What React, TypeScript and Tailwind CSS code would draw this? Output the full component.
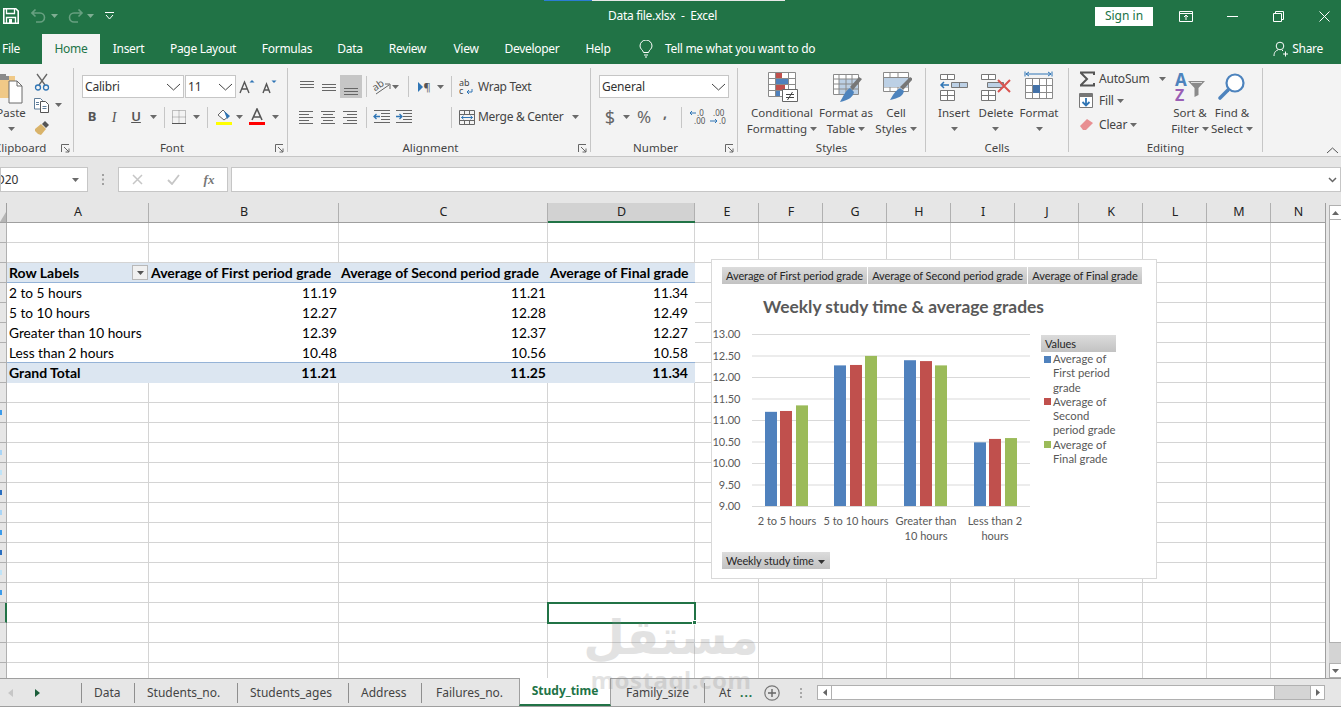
import type { ReactNode } from "react";

const UI = "font-['Noto_Sans',sans-serif]";
const CELL = "font-['Lato',sans-serif]";

function Caret({ color = "#6a6a6a" }: { color?: string }) {
  return (
    <svg width="7" height="4" viewBox="0 0 7 4" className="shrink-0">
      <path d="M0 0h7L3.500 4z" fill={color} />
    </svg>
  );
}

function Chevron() {
  return (
    <svg width="15" height="8" viewBox="0 0 15 8" className="shrink-0">
      <path d="M1 1l6.500 6L14 1" fill="none" stroke="#444" strokeWidth="1" />
    </svg>
  );
}

function Launcher() {
  return (
    <svg width="9" height="9" viewBox="0 0 9 9" className="shrink-0">
      <path d="M.5 8V.5H8M3 3l5 5M8 4.500V8H4.500" fill="none" stroke="#666" strokeWidth="1" />
    </svg>
  );
}

function Slot({ className, children }: { className: string; children?: ReactNode }) {
  return <div className={`flex h-full shrink-0 items-center justify-center ${className}`}>{children}</div>;
}

function Sep({ className }: { className: string }) {
  return (
    <div className={`flex h-full shrink-0 items-center justify-center ${className}`}>
      <div className="h-[21px] w-px bg-[#c6c6c6]" />
    </div>
  );
}

function Group({ className, label, launcher, children }: { className: string; label: ReactNode; launcher?: boolean; children: ReactNode }) {
  return (
    <div className={`flex h-[84px] shrink-0 flex-col border-r border-[#c6c6c6] ${className}`}>
      <div className="h-[74px] shrink-0">{children}</div>
      <div className="flex h-[12px] shrink-0 items-center">
        <div className="min-w-0 flex-1 text-center text-[11.5px] leading-[12px] text-[#444]">{label}</div>
        {launcher ? (
          <div className="flex w-[17px] justify-center pl-[1px]">
            <Launcher />
          </div>
        ) : null}
      </div>
    </div>
  );
}

function BigBtn({ className, icon, lines, caretOwnLine }: { className: string; icon: ReactNode; lines: ReactNode[]; caretOwnLine?: boolean }) {
  return (
    <div className={`flex shrink-0 flex-col items-center pt-[4px] ${className}`}>
      <div className="flex h-[30px] items-center justify-center">{icon}</div>
      <div className="mt-[3px] flex flex-col items-center whitespace-nowrap text-[11.5px] leading-[16px] text-[#444]">
        {lines.map((l, i) => (
          <div key={i} className="flex items-center gap-[3px]">
            {l}
            {!caretOwnLine && i === lines.length - 1 ? <Caret /> : null}
          </div>
        ))}
        {caretOwnLine ? (
          <div className="flex h-[16px] items-center">
            <Caret />
          </div>
        ) : null}
      </div>
    </div>
  );
}

function ComboBox({ className, text }: { className: string; text: string }) {
  return (
    <div className={`flex h-[23px] shrink-0 items-center justify-between border border-[#c6c6c6] bg-white pl-[2px] pr-[2px] text-[12px] tracking-[-0.2px] text-[#333] ${className}`}>
      <span>{text}</span>
      <Chevron />
    </div>
  );
}

const alignLines: Record<string, string> = {
  top: "M3 4.500h14M3 7.500h14M3 10.500h14",
  middle: "M3 7.500h14M3 10.500h14M3 13.500h14",
  bottom: "M3 11.500h14M3 14.500h14M3 17.500h14",
  left: "M2 4.500h14M2 7.500h10M2 10.500h14M2 13.500h10M2 16.500h14",
  center: "M2 4.500h14M4 7.500h10M2 10.500h14M4 13.500h10M2 16.500h14",
  right: "M2 4.500h14M6 7.500h10M2 10.500h14M6 13.500h10M2 16.500h14",
};

function AlignIcon({ kind }: { kind: string }) {
  return (
    <svg width="20" height="20" viewBox="0 0 20 20">
      <path d={alignLines[kind]} stroke="#666" strokeWidth="1" fill="none" />
    </svg>
  );
}

function ClipboardCol() {
  return (
    <div className="flex h-full">
      <div className="-ml-[4px] flex w-[30px] shrink-0 flex-col items-center pt-[4px]">
        <div className="h-[30px]">
          <svg width="32" height="32" viewBox="0 0 32 32" className="-ml-[1px]">
            <path d="M-6 4h26v22H-6z" fill="#f0c987" />
            <path d="M3 2h8v2h3v4H0V4h3z" fill="#8a8a8a" />
            <path d="M14 9h8l5 5v17H14z" fill="#fff" stroke="#6a6a6a" />
            <path d="M22 9v5h5" fill="none" stroke="#6a6a6a" />
          </svg>
        </div>
        <div className="mt-[3px] text-[11.5px] leading-[16px] text-[#444]">Paste</div>
        <div className="flex h-[16px] items-center">
          <Caret />
        </div>
      </div>
      <div className="ml-[6px] flex w-[33px] flex-col">
        <div className="mt-[2px] flex h-[23px] items-center pl-[2px]">
          <svg width="16" height="18" viewBox="0 0 16 18">
            <path d="M3 1l8 11M13 1L5 12" stroke="#666" strokeWidth="1.300" fill="none" />
            <circle cx="4" cy="14.500" r="2.500" fill="none" stroke="#2f75b5" strokeWidth="1.300" />
            <circle cx="12" cy="14.500" r="2.500" fill="none" stroke="#2f75b5" strokeWidth="1.300" />
          </svg>
        </div>
        <div className="flex h-[23px] items-center pl-[1px]">
          <svg width="17" height="16" viewBox="0 0 17 16">
            <path d="M1.500 1.500h6l2 2V12h-8z" fill="#fff" stroke="#5f7d99" />
            <path d="M7.500 4.500h5l3 3v8h-8z" fill="#fff" stroke="#555" />
            <path d="M9.500 9.500h4M9.500 11.500h4M3 5.500h3M3 7.500h3" stroke="#5f7d99" />
          </svg>
          <div className="ml-[5px]">
            <Caret />
          </div>
        </div>
        <div className="flex h-[23px] items-center pl-[2px]">
          <svg width="16" height="16" viewBox="0 0 16 16">
            <path d="M1 9l6-5 5 5-5 6-3-1-3-3z" fill="#d9b36a" />
            <path d="M8 4l3-3 4 4-3 3z" fill="#555" />
          </svg>
        </div>
      </div>
    </div>
  );
}

function FontGroup() {
  return (
    <div className="pt-[7px]">
      <div className="flex h-[23px] pl-[8px]">
        <ComboBox className="w-[102px]" text="Calibri" />
        <ComboBox className="ml-px w-[51px]" text="11" />
        <Slot className="w-[22px]">
          <svg width="16" height="16" viewBox="0 0 16 16">
            <path d="M1 14L5.500 3 10 14M2.800 10h5.400" fill="none" stroke="#555" strokeWidth="1.400" />
            <path d="M10.500 3.500L13 1l2.500 2.500z" fill="#2f75b5" />
          </svg>
        </Slot>
        <Slot className="w-[22px]">
          <svg width="16" height="16" viewBox="0 0 16 16">
            <path d="M2 14L5.500 5 9 14M3.300 11h4.400" fill="none" stroke="#555" strokeWidth="1.400" />
            <path d="M10.500 1.500L13 4l2.500-2.500z" fill="#2f75b5" />
          </svg>
        </Slot>
      </div>
      <div className="mt-[8px] flex h-[22px] pl-[7px] text-[#555]">
        <Slot className="w-[22px] text-[13px] font-bold">B</Slot>
        <Slot className="w-[22px] font-['Liberation_Serif',serif] text-[14px] italic">I</Slot>
        <Slot className="w-[22px] text-[13px] font-semibold underline">U</Slot>
        <Slot className="w-[12px]">
          <Caret />
        </Slot>
        <Sep className="w-[10px]" />
        <Slot className="w-[20px]">
          <svg width="14" height="14" viewBox="0 0 14 14">
            <path d="M.500.500h13v13H.500zM7 .500v13M.500 7h13" fill="none" stroke="#888" strokeDasharray="1 1" />
            <path d="M0 13.500h14" stroke="#555" />
          </svg>
        </Slot>
        <Slot className="w-[14px]">
          <Caret />
        </Slot>
        <Sep className="w-[8px]" />
        <Slot className="w-[25px]">
          <svg width="18" height="18" viewBox="0 0 18 18">
            <path d="M3 7l5-5 6 6-5 4z" fill="#fff" stroke="#666" />
            <path d="M9 3l6 5-3 3z" fill="#2f75b5" />
            <path d="M1 14h16v3H1z" fill="#ffff00" />
          </svg>
        </Slot>
        <Slot className="w-[6px]">
          <Caret />
        </Slot>
        <Slot className="w-[30px]">
          <svg width="18" height="18" viewBox="0 0 18 18">
            <path d="M4 12L9 1l5 11M5.500 9h7" fill="none" stroke="#555" strokeWidth="1.600" />
            <path d="M1 14h16v3H1z" fill="#ff0000" />
          </svg>
        </Slot>
        <Slot className="w-[6px]">
          <Caret />
        </Slot>
      </div>
    </div>
  );
}

function AlignmentGroup() {
  return (
    <div className="pt-[7px]">
      <div className="flex h-[23px] pl-[8px]">
        <Slot className="w-[22px]">
          <AlignIcon kind="top" />
        </Slot>
        <Slot className="w-[22px]">
          <AlignIcon kind="middle" />
        </Slot>
        <Slot className="w-[22px] bg-[#c6c6c6]">
          <AlignIcon kind="bottom" />
        </Slot>
        <Sep className="w-[8px]" />
        <Slot className="w-[22px]">
          <svg width="20" height="18" viewBox="0 0 20 18">
            <text x="2" y="11" fontSize="10" fill="#555" transform="rotate(-35 7 9)" fontFamily="Noto Sans">ab</text>
            <path d="M5 16L18 7M14 6h5v5" stroke="#666" fill="none" />
          </svg>
        </Slot>
        <Slot className="w-[6px]">
          <Caret />
        </Slot>
        <Sep className="w-[20px]" />
        <Slot className="w-[14px]">
          <svg width="14" height="12" viewBox="0 0 14 12">
            <path d="M0 1l5 5-5 5z" fill="#2f75b5" />
            <text x="5.500" y="10" fontSize="11" fill="#555" fontFamily="Noto Sans">¶</text>
          </svg>
        </Slot>
        <Slot className="w-[16px]">
          <Caret />
        </Slot>
        <Sep className="w-[6px]" />
        <Slot className="ml-[3px] w-[20px]">
          <svg width="16" height="16" viewBox="0 0 16 16">
            <text x="0" y="7" fontSize="9" fill="#444" fontFamily="Noto Sans">ab</text>
            <text x="0" y="15" fontSize="9" fill="#444" fontFamily="Noto Sans">c</text>
            <path d="M13 10v3H8M10 11l-2 2 2 2" fill="none" stroke="#2f75b5" />
          </svg>
        </Slot>
        <div className="ml-px flex items-center whitespace-nowrap text-[12px] tracking-[-0.3px] text-[#444]">Wrap Text</div>
      </div>
      <div className="mt-[8px] flex h-[22px] pl-[8px]">
        <Slot className="w-[22px]">
          <AlignIcon kind="left" />
        </Slot>
        <Slot className="w-[22px]">
          <AlignIcon kind="center" />
        </Slot>
        <Slot className="w-[22px]">
          <AlignIcon kind="right" />
        </Slot>
        <Sep className="w-[8px]" />
        <Slot className="w-[22px]">
          <svg width="17" height="14" viewBox="0 0 17 14">
            <path d="M1 .500h16M8 3.500h9M8 6.500h9M8 9.500h9M1 12.500h16" stroke="#666" fill="none" />
            <path d="M7 6.500H1M3.500 4L1 6.500 3.500 9" stroke="#2f75b5" strokeWidth="1.300" fill="none" />
          </svg>
        </Slot>
        <Slot className="w-[22px]">
          <svg width="17" height="14" viewBox="0 0 17 14">
            <path d="M1 .500h16M8 3.500h9M8 6.500h9M8 9.500h9M1 12.500h16" stroke="#666" fill="none" />
            <path d="M1 6.500h6M4.500 4L7 6.500 4.500 9" stroke="#2f75b5" strokeWidth="1.300" fill="none" />
          </svg>
        </Slot>
        <Sep className="ml-[37px] w-[1px]" />
        <Slot className="ml-[5px] w-[20px]">
          <svg width="16" height="15" viewBox="0 0 16 15">
            <path d="M.500.500h15v14H.500zM.500 4.500h15M.500 10.500h15M5.500.500v4M10.500.500v4M5.500 10.500v4M10.500 10.500v4" fill="none" stroke="#666" />
            <path d="M2.500 7.500h11M4.500 5.800l-2 1.700 2 1.700M11.500 5.800l2 1.700-2 1.700" fill="none" stroke="#2f75b5" />
          </svg>
        </Slot>
        <div className="ml-px flex w-[85px] shrink-0 items-center whitespace-nowrap text-[12px] tracking-[-0.3px] text-[#444]">Merge &amp; Center</div>
        <Slot className="w-[24px]">
          <Caret />
        </Slot>
      </div>
    </div>
  );
}

function NumberGroup() {
  return (
    <div className="pt-[7px]">
      <div className="pl-[8px]">
        <ComboBox className="w-[130px]" text="General" />
      </div>
      <div className="mt-[8px] flex h-[22px] pl-[8px] text-[#666]">
        <Slot className="w-[22px] text-[18px]">$</Slot>
        <Slot className="w-[10px]">
          <Caret />
        </Slot>
        <Slot className="w-[26px] text-[17px]">%</Slot>
        <Slot className="w-[16px] pb-[9px] text-[14px] font-bold">,</Slot>
        <Sep className="w-[16px]" />
        <Slot className="w-[18px]">
          <svg width="18" height="16" viewBox="0 0 18 16">
            <text x="8" y="7" fontSize="8" fill="#555" fontFamily="Noto Sans">.0</text>
            <text x="5" y="15" fontSize="8" fill="#555" fontFamily="Noto Sans">.00</text>
            <path d="M7 4H1M3 2L1 4l2 2" fill="none" stroke="#2f75b5" />
          </svg>
        </Slot>
        <Slot className="w-[22px]">
          <svg width="18" height="16" viewBox="0 0 18 16">
            <text x="4" y="7" fontSize="8" fill="#555" fontFamily="Noto Sans">.00</text>
            <text x="10" y="15" fontSize="8" fill="#555" fontFamily="Noto Sans">.0</text>
            <path d="M1 12h7M6 10l2 2-2 2" fill="none" stroke="#2f75b5" />
          </svg>
        </Slot>
      </div>
    </div>
  );
}

function CondFormatIcon() {
  return (
    <svg width="32" height="30" viewBox="0 0 32 30">
      <path d="M2.500.500h27v24h-27zM2.500 6.500h27M2.500 12.500h27M2.500 18.500h27M9.500.500v24M22.500.500v24" fill="#fff" stroke="#8a8a8a" />
      <path d="M10 1h6v5h-6zM10 13h9v5h-9z" fill="#c0504d" />
      <path d="M10 7h12v5H10zM10 19h4v5h-4z" fill="#4f81bd" />
      <path d="M16.500 17.500h15v12h-15z" fill="#fff" stroke="#666" />
      <path d="M20 22.500h8M20 25.500h8M26.500 20l-5 8" stroke="#444" fill="none" />
    </svg>
  );
}

function TableIcon() {
  return (
    <svg width="32" height="30" viewBox="0 0 32 30">
      <path d="M3.500 2.500h25v20h-25z" fill="#fff" stroke="#8a8a8a" />
      <path d="M9 7h19v15H9z" fill="#bcd0e5" />
      <path d="M3.500 7h25M3.500 12h25M3.500 17h25M9 2.500v20M16 2.500v20M22 2.500v20" stroke="#8a8a8a" fill="none" />
      <path d="M32 7l-9 11-3-3 9-10z" fill="#777" />
      <path d="M20 16l4 4c-1 5-5 8-14 10 3-5 5-11 10-14z" fill="#4d83bd" />
    </svg>
  );
}

function CellStyleIcon() {
  return (
    <svg width="32" height="30" viewBox="0 0 32 30">
      <path d="M3.500.500h25v19h-25zM3.500 5.500h25M3.500 15h25M10 .500v5M18 .500v5M10 15v4.500M18 15v4.500" fill="#fff" stroke="#8a8a8a" />
      <path d="M4 6h24v9H4z" fill="#bcd0e5" />
      <path d="M33 7l-10 11-3-3 10-10z" fill="#777" />
      <path d="M20 16l4 3c-1 5-5 7-14 9 3-5 5-9 10-12z" fill="#4d83bd" />
    </svg>
  );
}

function InsertIcon() {
  return (
    <svg width="30" height="30" viewBox="0 0 30 30">
      <path d="M1.500 2.500h14v5h-14zM8.500 2.500v5M1.500 18.500h14v10h-14zM1.500 23.500h14M8.500 18.500v10" fill="#fff" stroke="#777" />
      <path d="M12.500 10.500h16v5h-16z" fill="#bcd0e5" stroke="#777" />
      <path d="M20.500 10.500v5" stroke="#777" />
      <path d="M10 13H2M5 10l-3 3 3 3" fill="none" stroke="#2f75b5" strokeWidth="1.500" />
    </svg>
  );
}

function DeleteIcon() {
  return (
    <svg width="32" height="30" viewBox="0 0 32 30">
      <path d="M1.500 2.500h14v5h-14zM8.500 2.500v5M1.500 18.500h14v10h-14zM1.500 23.500h14M8.500 18.500v10" fill="#fff" stroke="#777" />
      <path d="M7.500 10.500h16v5h-16z" fill="#bcd0e5" stroke="#777" />
      <path d="M18 8l12 12M30 8L18 20" stroke="#d9534f" strokeWidth="2" />
    </svg>
  );
}

function FormatIcon() {
  return (
    <svg width="30" height="32" viewBox="0 0 30 32">
      <path d="M1 .500v5M28 .500v5" stroke="#2f75b5" />
      <path d="M2 3h25M5 1L2 3l3 2M24 1l3 2-3 2" fill="none" stroke="#2f75b5" />
      <path d="M1.500 7.500h27v20H1.500zM1.500 14.500h27M1.500 21.500h27M8.500 7.500v20M15.500 7.500v20M22.500 7.500v20" fill="#fff" stroke="#8a8a8a" />
      <path d="M9 14h7v8H9z" fill="#4472a8" />
    </svg>
  );
}

function SortIcon() {
  return (
    <svg width="32" height="30" viewBox="0 0 32 30">
      <text x="1" y="14" fontSize="17" fontWeight="700" fill="#4d83bd" fontFamily="Noto Sans">A</text>
      <text x="1" y="29" fontSize="16" fontWeight="700" fill="#9a5fb5" fontFamily="Noto Sans">Z</text>
      <path d="M14 9h17l-6.500 7v7l-4 2v-9z" fill="#8a8a8a" />
      <path d="M17 10.500h11" stroke="#ddd" />
    </svg>
  );
}

function FindIcon() {
  return (
    <svg width="30" height="30" viewBox="0 0 30 30">
      <circle cx="18" cy="11" r="8.500" fill="#fff" stroke="#4d83bd" strokeWidth="2.200" />
      <path d="M11 18L3 26" stroke="#4d83bd" strokeWidth="3.600" strokeLinecap="round" />
    </svg>
  );
}

function EditingGroup() {
  return (
    <div className="flex h-full">
      <div className="w-[101px] shrink-0 pl-[10px] text-[12px] tracking-[-0.2px] text-[#444]">
        <div className="flex h-[21px] items-center">
          <svg width="16" height="16" viewBox="0 0 16 16">
            <path d="M1 1.500h14v2.500M1 14.500h14V12M1.500 1.500L8 8l-6.500 6.500" fill="none" stroke="#555" strokeWidth="2" />
          </svg>
          <span className="ml-[4px]">AutoSum</span>
          <div className="ml-[9px]">
            <Caret />
          </div>
        </div>
        <div className="flex h-[23px] items-center">
          <svg width="15" height="16" viewBox="0 0 15 16">
            <path d="M.500.500h13v14H.500z" fill="#fff" stroke="#777" />
            <path d="M1 1h12v3H1z" fill="#777" />
            <path d="M7 5v7M3.500 9L7 12.500 10.500 9" fill="none" stroke="#2f75b5" strokeWidth="1.800" />
          </svg>
          <span className="ml-[5px]">Fill</span>
          <div className="ml-[3px]">
            <Caret />
          </div>
        </div>
        <div className="mt-px flex h-[23px] items-center">
          <svg width="15" height="13" viewBox="0 0 15 13">
            <path d="M1 8l7-7 6 4-7 7H4z" fill="#e88f92" />
          </svg>
          <span className="ml-[5px]">Clear</span>
          <div className="ml-[3px]">
            <Caret />
          </div>
        </div>
      </div>
      <BigBtn className="w-[40px]" icon={<SortIcon />} lines={["Sort &", "Filter"]} />
      <BigBtn className="w-[44px]" icon={<FindIcon />} lines={["Find &", "Select"]} />
    </div>
  );
}

function Ribbon() {
  return (
    <div className={`flex h-[93px] shrink-0 border-b border-[#c6c6c6] bg-[#f3f3f3] pt-[4px] ${UI}`}>
      <Group className="w-[74px]" launcher label={<div className="-ml-[6px] text-left">Clipboard</div>}>
        <ClipboardCol />
      </Group>
      <Group className="w-[214px]" launcher label="Font">
        <FontGroup />
      </Group>
      <Group className="w-[303px]" launcher label="Alignment">
        <AlignmentGroup />
      </Group>
      <Group className="w-[147px]" launcher label="Number">
        <NumberGroup />
      </Group>
      <Group className="w-[188px]" label="Styles">
        <div className="flex pl-[4px]">
          <BigBtn className="w-[80px]" icon={<CondFormatIcon />} lines={["Conditional", "Formatting"]} />
          <BigBtn className="w-[48px]" icon={<TableIcon />} lines={["Format as", "Table"]} />
          <BigBtn className="w-[52px]" icon={<CellStyleIcon />} lines={["Cell", "Styles"]} />
        </div>
      </Group>
      <Group className="w-[143px]" label="Cells">
        <div className="flex pl-[4px]">
          <BigBtn className="w-[48px]" icon={<InsertIcon />} lines={["Insert"]} caretOwnLine />
          <BigBtn className="w-[36px]" icon={<DeleteIcon />} lines={["Delete"]} caretOwnLine />
          <BigBtn className="w-[50px]" icon={<FormatIcon />} lines={["Format"]} caretOwnLine />
        </div>
      </Group>
      <Group className="w-[194px]" label="Editing">
        <EditingGroup />
      </Group>
      <div className="flex flex-1 items-end justify-end pb-[2px] pr-[2px]">
        <svg width="13" height="7" viewBox="0 0 13 7">
          <path d="M1 6l5.500-5L12 6" fill="none" stroke="#555" />
        </svg>
      </div>
    </div>
  );
}

function TitleBar() {
  return (
    <div className="relative flex h-[32px] shrink-0 items-center text-white">
      <div className="absolute left-[544px] top-0 flex h-px">
        <div className="h-px w-[48px] bg-[#2b7cd3]" />
        <div className="h-px w-[193px] bg-[#e8e8e8]" />
      </div>
      <div className="flex w-[120px] items-center pl-[3px]">
        <svg width="16" height="16" viewBox="0 0 16 16">
          <path d="M.800.800h12l2.400 2.400v12H.800z" fill="none" stroke="#fff" strokeWidth="1.600" />
          <path d="M3.500 1v4.500h8V1M3.500 15V9.500h9V15" fill="none" stroke="#fff" strokeWidth="1.300" />
          <path d="M6 11h3v4H6z" fill="#fff" />
        </svg>
        <svg width="20" height="14" viewBox="0 0 20 14" className="ml-[12px] opacity-40">
          <path d="M1 4h8a4.500 4.500 0 010 9H5M4.500.500L1 4l3.500 3.500" fill="none" stroke="#cfe3d7" strokeWidth="1.600" />
        </svg>
        <Caret color="#7fae93" />
        <svg width="20" height="14" viewBox="0 0 20 14" className="ml-[9px] opacity-40">
          <path d="M15 4H7a4.500 4.500 0 000 9h4M11.500.500L15 4l-3.500 3.500" fill="none" stroke="#cfe3d7" strokeWidth="1.600" />
        </svg>
        <Caret color="#7fae93" />
        <svg width="9" height="8" viewBox="0 0 9 8" className="ml-[11px]">
          <path d="M0 .500h9M1 3l3.500 4L8 3" fill="none" stroke="#fff" />
        </svg>
      </div>
      <div className={`absolute left-[608px] whitespace-pre text-[12px] tracking-[-0.3px] ${UI}`}>Data file.xlsx  -  Excel</div>
      <div className="ml-auto flex items-center">
        <div className={`flex h-[19px] w-[58px] items-center justify-center bg-white text-[12px] text-[#217346] ${UI}`}>Sign in</div>
        <div className="ml-[26px] flex w-[14px] justify-center">
          <svg width="14" height="11" viewBox="0 0 14 11">
            <path d="M.500.500h13v10H.500zM.500 2.500h13" fill="none" stroke="#fff" />
            <path d="M7 9V4M5 6l2-2 2 2" fill="none" stroke="#fff" />
          </svg>
        </div>
        <div className="ml-[34px] h-px w-[11px] bg-white" />
        <svg width="11" height="11" viewBox="0 0 11 11" className="ml-[35px]">
          <path d="M.500 2.500h8v8h-8zM2.500 2.500v-2h8v8h-2" fill="none" stroke="#fff" />
        </svg>
        <svg width="11" height="11" viewBox="0 0 11 11" className="ml-[35px] mr-[11px]">
          <path d="M.500.500l10 10M10.500.500l-10 10" stroke="#fff" />
        </svg>
      </div>
    </div>
  );
}

function TabRow() {
  const tabs = [
    { label: "Insert", w: "w-[57px]" },
    { label: "Page Layout", w: "w-[92px]" },
    { label: "Formulas", w: "w-[76px]" },
    { label: "Data", w: "w-[50px]" },
    { label: "Review", w: "w-[65px]" },
    { label: "View", w: "w-[52px]" },
    { label: "Developer", w: "w-[80px]" },
    { label: "Help", w: "w-[52px]" },
  ];
  return (
    <div className={`flex h-[32px] shrink-0 items-end text-[12px] tracking-[-0.3px] text-white ${UI}`}>
      <div className="flex h-[30px] w-[42px] items-center pl-[2px]">File</div>
      <div className="flex h-[30px] w-[58px] items-center justify-center bg-[#f3f3f3] text-[#217346]">Home</div>
      {tabs.map((t) => (
        <div key={t.label} className={`flex h-[30px] items-center justify-center ${t.w}`}>
          {t.label}
        </div>
      ))}
      <div className="flex h-[30px] items-center pl-[15px]">
        <svg width="14" height="18" viewBox="0 0 14 18">
          <path d="M4.500 12.500C4 10 1 9 1 6a6 6 0 0112 0c0 3-3 4-3.500 6.500zM5 15h4M6 17h2" fill="none" stroke="#fff" />
        </svg>
        <span className="ml-[12px]">Tell me what you want to do</span>
      </div>
      <div className="ml-auto flex h-[30px] items-center pr-[18px]">
        <svg width="16" height="16" viewBox="0 0 16 16">
          <circle cx="7" cy="5" r="3.800" fill="none" stroke="#fff" />
          <path d="M1 15c0-4 2-5.500 4-6M9 9l1 1M10 13h5M12.500 10.500v5" fill="none" stroke="#fff" />
        </svg>
        <span className="ml-[3px]">Share</span>
      </div>
    </div>
  );
}

function FormulaBar() {
  return (
    <div className="flex h-[35px] shrink-0 items-end bg-[#e6e6e6]">
      <div className={`flex h-[25px] w-[88px] items-center justify-between overflow-hidden border border-[#c6c6c6] bg-white pr-[8px] text-[12px] text-[#333] ${UI}`}>
        <span className="-ml-[5px]">D20</span>
        <Caret />
      </div>
      <div className="flex h-[25px] w-[30px] items-center justify-center text-[#a0a0a0]">
        <svg width="2" height="11" viewBox="0 0 2 11">
          <path d="M0 0h2v2H0zM0 4.500h2v2H0zM0 9h2v2H0z" fill="#a0a0a0" />
        </svg>
      </div>
      <div className="flex h-[25px] w-[110px] items-center border border-[#c6c6c6] bg-white">
        <Slot className="w-[36px]">
          <svg width="11" height="11" viewBox="0 0 11 11">
            <path d="M1 1l9 9M10 1l-9 9" stroke="#c6c6c6" strokeWidth="1.500" />
          </svg>
        </Slot>
        <Slot className="w-[36px]">
          <svg width="13" height="11" viewBox="0 0 13 11">
            <path d="M1 6l4 4 7-9" fill="none" stroke="#c6c6c6" strokeWidth="1.800" />
          </svg>
        </Slot>
        <Slot className="w-[36px] font-['Liberation_Serif',serif] text-[13px] font-bold italic text-[#777]">fx</Slot>
      </div>
      <div className="ml-[3px] flex h-[25px] flex-1 items-center justify-end border border-[#c6c6c6] bg-white pr-[3px]">
        <svg width="9" height="6" viewBox="0 0 9 6">
          <path d="M1 1l3.500 3.500L8 1" fill="none" stroke="#666" strokeWidth="1.500" />
        </svg>
      </div>
    </div>
  );
}

const colW = [
  "w-[142px]", "w-[190px]", "w-[209px]", "w-[147px]", "w-[64px]", "w-[64px]", "w-[64px]",
  "w-[64px]", "w-[64px]", "w-[64px]", "w-[64px]", "w-[64px]", "w-[64px]", "w-[55px]",
];
const colNames = "ABCDEFGHIJKLMN".split("");

const table: { label: string; vals: string[] }[] = [
  { label: "2 to 5 hours", vals: ["11.19", "11.21", "11.34"] },
  { label: "5 to 10 hours", vals: ["12.27", "12.28", "12.49"] },
  { label: "Greater than 10 hours", vals: ["12.39", "12.37", "12.27"] },
  { label: "Less than 2 hours", vals: ["10.48", "10.56", "10.58"] },
];

// clipped row numbers leave these coloured slivers at the window edge
const rowSlivers: Record<number, string> = {
  9: "bg-[#3b9bea]",
  11: "bg-[#a8d4f5]",
  12: "bg-[#bfe3f7]",
  13: "bg-[#2a6fc0]",
  14: "bg-[#a8d4f5]",
  15: "bg-[#3b9bea]",
  16: "bg-[#2a6fc0]",
  17: "bg-[#bfe3f7]",
  18: "bg-[#3b9bea]",
};

function ColHeader() {
  return (
    <div className="flex h-[20px] border-b border-[#9f9f9f]">
      <div className="flex w-[7px] shrink-0 items-end justify-end border-r border-[#9f9f9f]">
        <div className="h-0 w-0 border-b-[10px] border-l-[6px] border-b-[#b5b5b5] border-l-transparent" />
      </div>
      {colNames.map((c, i) => (
        <div
          key={c}
          className={`relative flex shrink-0 items-center justify-center text-[12.500px] text-[#222] ${colW[i]} ${c === "D" ? "bg-[#d2d2d2]" : ""}`}
        >
          {c}
          <div className="absolute bottom-0 right-0 top-0 w-px bg-[#b0b0b0]" />
          {c === "D" ? <div className="absolute -bottom-px left-0 right-0 h-[2px] bg-[#217346]" /> : null}
        </div>
      ))}
    </div>
  );
}

function Cells({ from }: { from: number }) {
  return (
    <>
      {colW.slice(from).map((w, i) => (
        <div key={i} className={`h-full shrink-0 border-b border-r border-[#d4d4d4] bg-white ${w}`} />
      ))}
    </>
  );
}

function SheetRow({ index }: { index: number }) {
  const selected = index === 19;
  let body: ReactNode = <Cells from={0} />;
  if (index === 2) {
    body = (
      <>
        <div className="flex h-full w-[142px] shrink-0 items-center justify-between border-b border-[#95b3d7] bg-[#dce6f1] pl-[2px] pr-px text-[14px] font-bold">
          <span>Row Labels</span>
          <div className="flex h-[15px] w-[16px] items-center justify-center border border-[#b8b8b8] bg-[#f0f0f0]">
            <Caret color="#555" />
          </div>
        </div>
        <div className="flex h-full w-[190px] shrink-0 items-center border-b border-[#95b3d7] bg-[#dce6f1] pl-[2px] text-[14px] font-bold">Average of First period grade</div>
        <div className="flex h-full w-[209px] shrink-0 items-center border-b border-[#95b3d7] bg-[#dce6f1] pl-[2px] text-[14px] font-bold">Average of Second period grade</div>
        <div className="flex h-full w-[147px] shrink-0 items-center border-b border-[#95b3d7] bg-[#dce6f1] pl-[2px] text-[14px] font-bold">Average of Final grade</div>
        <Cells from={4} />
      </>
    );
  } else if (index >= 3 && index <= 6) {
    const row = table[index - 3];
    const line = index === 6 ? "border-b border-[#95b3d7]" : "";
    body = (
      <>
        <div className={`flex h-full w-[142px] shrink-0 items-center bg-white pl-[2px] ${line}`}>{row.label}</div>
        <div className={`flex h-full w-[190px] shrink-0 items-center justify-end bg-white pr-[2px] ${line}`}>{row.vals[0]}</div>
        <div className={`flex h-full w-[209px] shrink-0 items-center justify-end bg-white pr-[2px] ${line}`}>{row.vals[1]}</div>
        <div className={`flex h-full w-[147px] shrink-0 items-center justify-end bg-white pr-[7px] ${line}`}>{row.vals[2]}</div>
        <Cells from={4} />
      </>
    );
  } else if (index === 7) {
    body = (
      <>
        <div className="flex h-full w-[142px] shrink-0 items-center bg-[#dce6f1] pl-[2px] text-[14px] font-bold">Grand Total</div>
        <div className="flex h-full w-[190px] shrink-0 items-center justify-end bg-[#dce6f1] pr-[2px] text-[14px] font-bold">11.21</div>
        <div className="flex h-full w-[209px] shrink-0 items-center justify-end bg-[#dce6f1] pr-[2px] text-[14px] font-bold">11.25</div>
        <div className="flex h-full w-[147px] shrink-0 items-center justify-end bg-[#dce6f1] pr-[7px] text-[14px] font-bold">11.34</div>
        <Cells from={4} />
      </>
    );
  }
  return (
    <div className={`flex h-[20px] shrink-0 text-[13.700px] leading-none text-black ${CELL}`}>
      <div className={`flex h-full w-[7px] shrink-0 items-center border-b border-r border-[#b0b0b0] ${selected ? "border-r-2 border-r-[#217346] bg-[#d2d2d2]" : "bg-[#e6e6e6]"}`}>
        {rowSlivers[index] ? <div className={`h-[5px] w-[2px] ${rowSlivers[index]}`} /> : null}
      </div>
      {body}
    </div>
  );
}

function Bars() {
  const groups = [
    { x: [765, 780, 796], v: [11.19, 11.21, 11.34] },
    { x: [834, 850, 865], v: [12.27, 12.28, 12.49] },
    { x: [904, 920, 935], v: [12.39, 12.37, 12.27] },
    { x: [974, 989, 1005], v: [10.48, 10.56, 10.58] },
  ];
  const colors = ["#4f81bd", "#c0504d", "#9bbb59"];
  const ticks = ["13.00", "12.50", "12.00", "11.50", "11.00", "10.50", "10.00", "9.50", "9.00"];
  const txt = { fontFamily: "Lato", fontSize: 11, fill: "#595959" };
  return (
    <svg width="325" height="227" viewBox="712 318 325 227" className="shrink-0">
      {ticks.map((t, i) => (
        <g key={t}>
          <path d={`M752 ${334.5 + i * 21.5}H1030`} stroke="#d9d9d9" />
          <text x="740.500" y={338 + i * 21.5} textAnchor="end" {...txt}>{t}</text>
        </g>
      ))}
      {groups.map((g) =>
        g.x.map((x, i) => {
          const top = 506 - (g.v[i] - 9) * 43;
          return <rect key={x} x={x} y={top} width="12" height={506 - top} fill={colors[i]} />;
        }),
      )}
      <text x="787" y="525" textAnchor="middle" {...txt}>2 to 5 hours</text>
      <text x="856" y="525" textAnchor="middle" {...txt}>5 to 10 hours</text>
      <text x="926" y="525" textAnchor="middle" {...txt}>Greater than</text>
      <text x="926" y="540" textAnchor="middle" {...txt}>10 hours</text>
      <text x="995" y="525" textAnchor="middle" {...txt}>Less than 2</text>
      <text x="995" y="540" textAnchor="middle" {...txt}>hours</text>
    </svg>
  );
}

function FieldBtn({ className, children }: { className: string; children: ReactNode }) {
  return (
    <div className={`flex h-[17px] shrink-0 items-center whitespace-nowrap bg-gradient-to-b from-[#dcdcdc] to-[#c2c2c2] pt-[2px] text-[11px] tracking-[-0.1px] text-[#262626] ${className}`}>
      {children}
    </div>
  );
}

function Chart() {
  const legend = [
    { color: "bg-[#4f81bd]", lines: ["Average of", "First period", "grade"] },
    { color: "bg-[#c0504d]", lines: ["Average of", "Second", "period grade"] },
    { color: "bg-[#9bbb59]", lines: ["Average of", "Final grade"] },
  ];
  return (
    <div className={`absolute left-[711px] top-[56px] h-[320px] w-[446px] border border-[#d9d9d9] bg-white ${CELL}`}>
      <div className="flex gap-px pl-[10px] pt-[7px]">
        <FieldBtn className="w-[145px] justify-center">Average of First period grade</FieldBtn>
        <FieldBtn className="w-[159px] justify-center">Average of Second period grade</FieldBtn>
        <FieldBtn className="w-[114px] justify-center">Average of Final grade</FieldBtn>
      </div>
      <div className="mt-[12px] h-[22px] pl-[51px] text-[17.400px] font-bold leading-[22px] text-[#595959]">Weekly study time &amp; average grades</div>
      <div className="flex">
        <Bars />
        <div className="ml-[4px] mt-[17px] w-[78px]">
          <FieldBtn className="w-[75px] pl-[4px]">Values</FieldBtn>
          <div className="text-[11.300px] leading-[14.250px] text-[#595959]">
            {legend.map((l) => (
              <div key={l.lines[0] + l.lines[1]} className="flex">
                <div className="ml-[3px] flex h-[14px] w-[9px] shrink-0 items-center">
                  <div className={`h-[7px] w-[7px] ${l.color}`} />
                </div>
                <div className="whitespace-nowrap">
                  {l.lines.map((t) => (
                    <div key={t}>{t}</div>
                  ))}
                </div>
              </div>
            ))}
          </div>
        </div>
      </div>
      <div className="mt-[7px] pl-[10px]">
        <FieldBtn className="w-[108px] justify-between pl-[4px] pr-[5px]">
          Weekly study time
          <Caret color="#333" />
        </FieldBtn>
      </div>
    </div>
  );
}

function Grid() {
  return (
    <div className="relative min-w-0 flex-1 overflow-hidden border-r border-[#9f9f9f] bg-[#e6e6e6]">
      <ColHeader />
      <div>
        {Array.from({ length: 23 }, (_, i) => (
          <SheetRow key={i} index={i} />
        ))}
      </div>
      <Chart />
      <div className="absolute left-[547px] top-[399px] h-[22px] w-[149px] border-2 border-[#217346]">
        <div className="absolute -bottom-[3px] -right-[3px] h-[5px] w-[5px] border border-white bg-[#217346]" />
      </div>
    </div>
  );
}

function VScroll() {
  return (
    <div className="flex w-[15px] shrink-0 flex-col bg-[#e6e6e6] pl-[3px] pt-[2px]">
      <div className="flex h-[15px] shrink-0 items-center justify-center border border-r-0 border-[#b0b0b0] bg-white">
        <svg width="7" height="4" viewBox="0 0 7 4">
          <path d="M0 4h7L3.500 0z" fill="#666" />
        </svg>
      </div>
      <div className="h-[423px] shrink-0 border-b border-l border-[#b0b0b0] bg-white" />
      <div className="min-h-0 flex-1 bg-[#d4d4d4]" />
      <div className="flex h-[15px] shrink-0 items-center justify-center border border-r-0 border-[#b0b0b0] bg-white">
        <Caret color="#666" />
      </div>
    </div>
  );
}

function SheetTabs() {
  const before = [
    { label: "Data", w: "w-[53px]" },
    { label: "Students_no.", w: "w-[103px]" },
    { label: "Students_ages", w: "w-[111px]" },
    { label: "Address", w: "w-[73px]" },
    { label: "Failures_no.", w: "w-[98px]" },
  ];
  return (
    <div className={`relative flex h-[29px] shrink-0 items-stretch border-y border-[#9f9f9f] bg-[#e6e6e6] text-[12px] text-[#444] ${UI}`}>
      <div className="flex w-[81px] shrink-0 items-center pl-[7px]">
        <svg width="6" height="8" viewBox="0 0 6 8">
          <path d="M6 0v8L1 4z" fill="#c6c6c6" />
        </svg>
        <svg width="6" height="8" viewBox="0 0 6 8" className="ml-[22px]">
          <path d="M0 0v8l5-4z" fill="#1b5e3a" />
        </svg>
      </div>
      {before.map((t, i) => (
        <div key={t.label} className={`flex shrink-0 items-center ${t.w}`}>
          <div className="h-[20px] w-px bg-[#8f8f8f]" />
          <span className={i === 4 ? "ml-[14px]" : "ml-[12px]"}>{t.label}</span>
        </div>
      ))}
      <div className="-mt-px flex w-[92px] shrink-0 items-center justify-center border-x border-b-2 border-x-[#9f9f9f] border-b-[#217346] bg-white font-bold text-[#217346]">
        Study_time
      </div>
      <div className="flex w-[93px] shrink-0 items-center justify-center">Family_size</div>
      <div className="flex w-[70px] shrink-0 items-center">
        <div className="h-[20px] w-px bg-[#8f8f8f]" />
        <span className="ml-[14px]">At</span>
        <span className="ml-[9px] font-bold tracking-[1px] text-[#217346]">...</span>
      </div>
      <div className="flex w-[43px] items-center">
        <svg width="16" height="16" viewBox="0 0 16 16" className="-ml-[10px]">
          <circle cx="8" cy="8" r="7.200" fill="none" stroke="#777" strokeWidth="1.200" />
          <path d="M8 4v8M4 8h8" stroke="#666" strokeWidth="1.400" />
        </svg>
        <svg width="2" height="10" viewBox="0 0 2 10" className="ml-[20px]">
          <path d="M0 0h2v2H0zM0 4h2v2H0zM0 8h2v2H0z" fill="#a8a8a8" />
        </svg>
      </div>
      <div className="flex h-[15px] w-[508px] shrink-0 self-center border border-[#b0b0b0] bg-[#d4d4d4]">
        <div className="flex w-[14px] items-center justify-center border-r border-[#b0b0b0] bg-white">
          <svg width="4" height="7" viewBox="0 0 4 7">
            <path d="M4 0v7L0 3.500z" fill="#666" />
          </svg>
        </div>
        <div className="w-[443px] border-r border-[#b0b0b0] bg-white" />
        <div className="flex-1" />
        <div className="flex w-[14px] items-center justify-center border-l border-[#b0b0b0] bg-white">
          <svg width="4" height="7" viewBox="0 0 4 7">
            <path d="M0 0v7l4-3.500z" fill="#666" />
          </svg>
        </div>
      </div>
    </div>
  );
}

function Watermark() {
  return (
    <div className="pointer-events-none absolute left-[590px] top-[606px] flex w-[162px] flex-col items-center text-[#8f8f8f] opacity-25">
      <div dir="rtl" className="font-['DejaVu_Sans',sans-serif] text-[48px] font-bold leading-[62px]">مستقل</div>
      <div className="font-['Noto_Sans',sans-serif] text-[24px] font-bold leading-[24px] tracking-[0.5px]">mostaql.com</div>
    </div>
  );
}

export default function App() {
  return (
    <div className="relative flex h-[707px] w-[1341px] flex-col overflow-hidden bg-[#e6e6e6]">
      <div className="shrink-0 bg-[#217346]">
        <TitleBar />
        <TabRow />
      </div>
      <Ribbon />
      <FormulaBar />
      <div className="mt-[11px] flex min-h-0 flex-1">
        <Grid />
        <VScroll />
      </div>
      <SheetTabs />
      <Watermark />
    </div>
  );
}
